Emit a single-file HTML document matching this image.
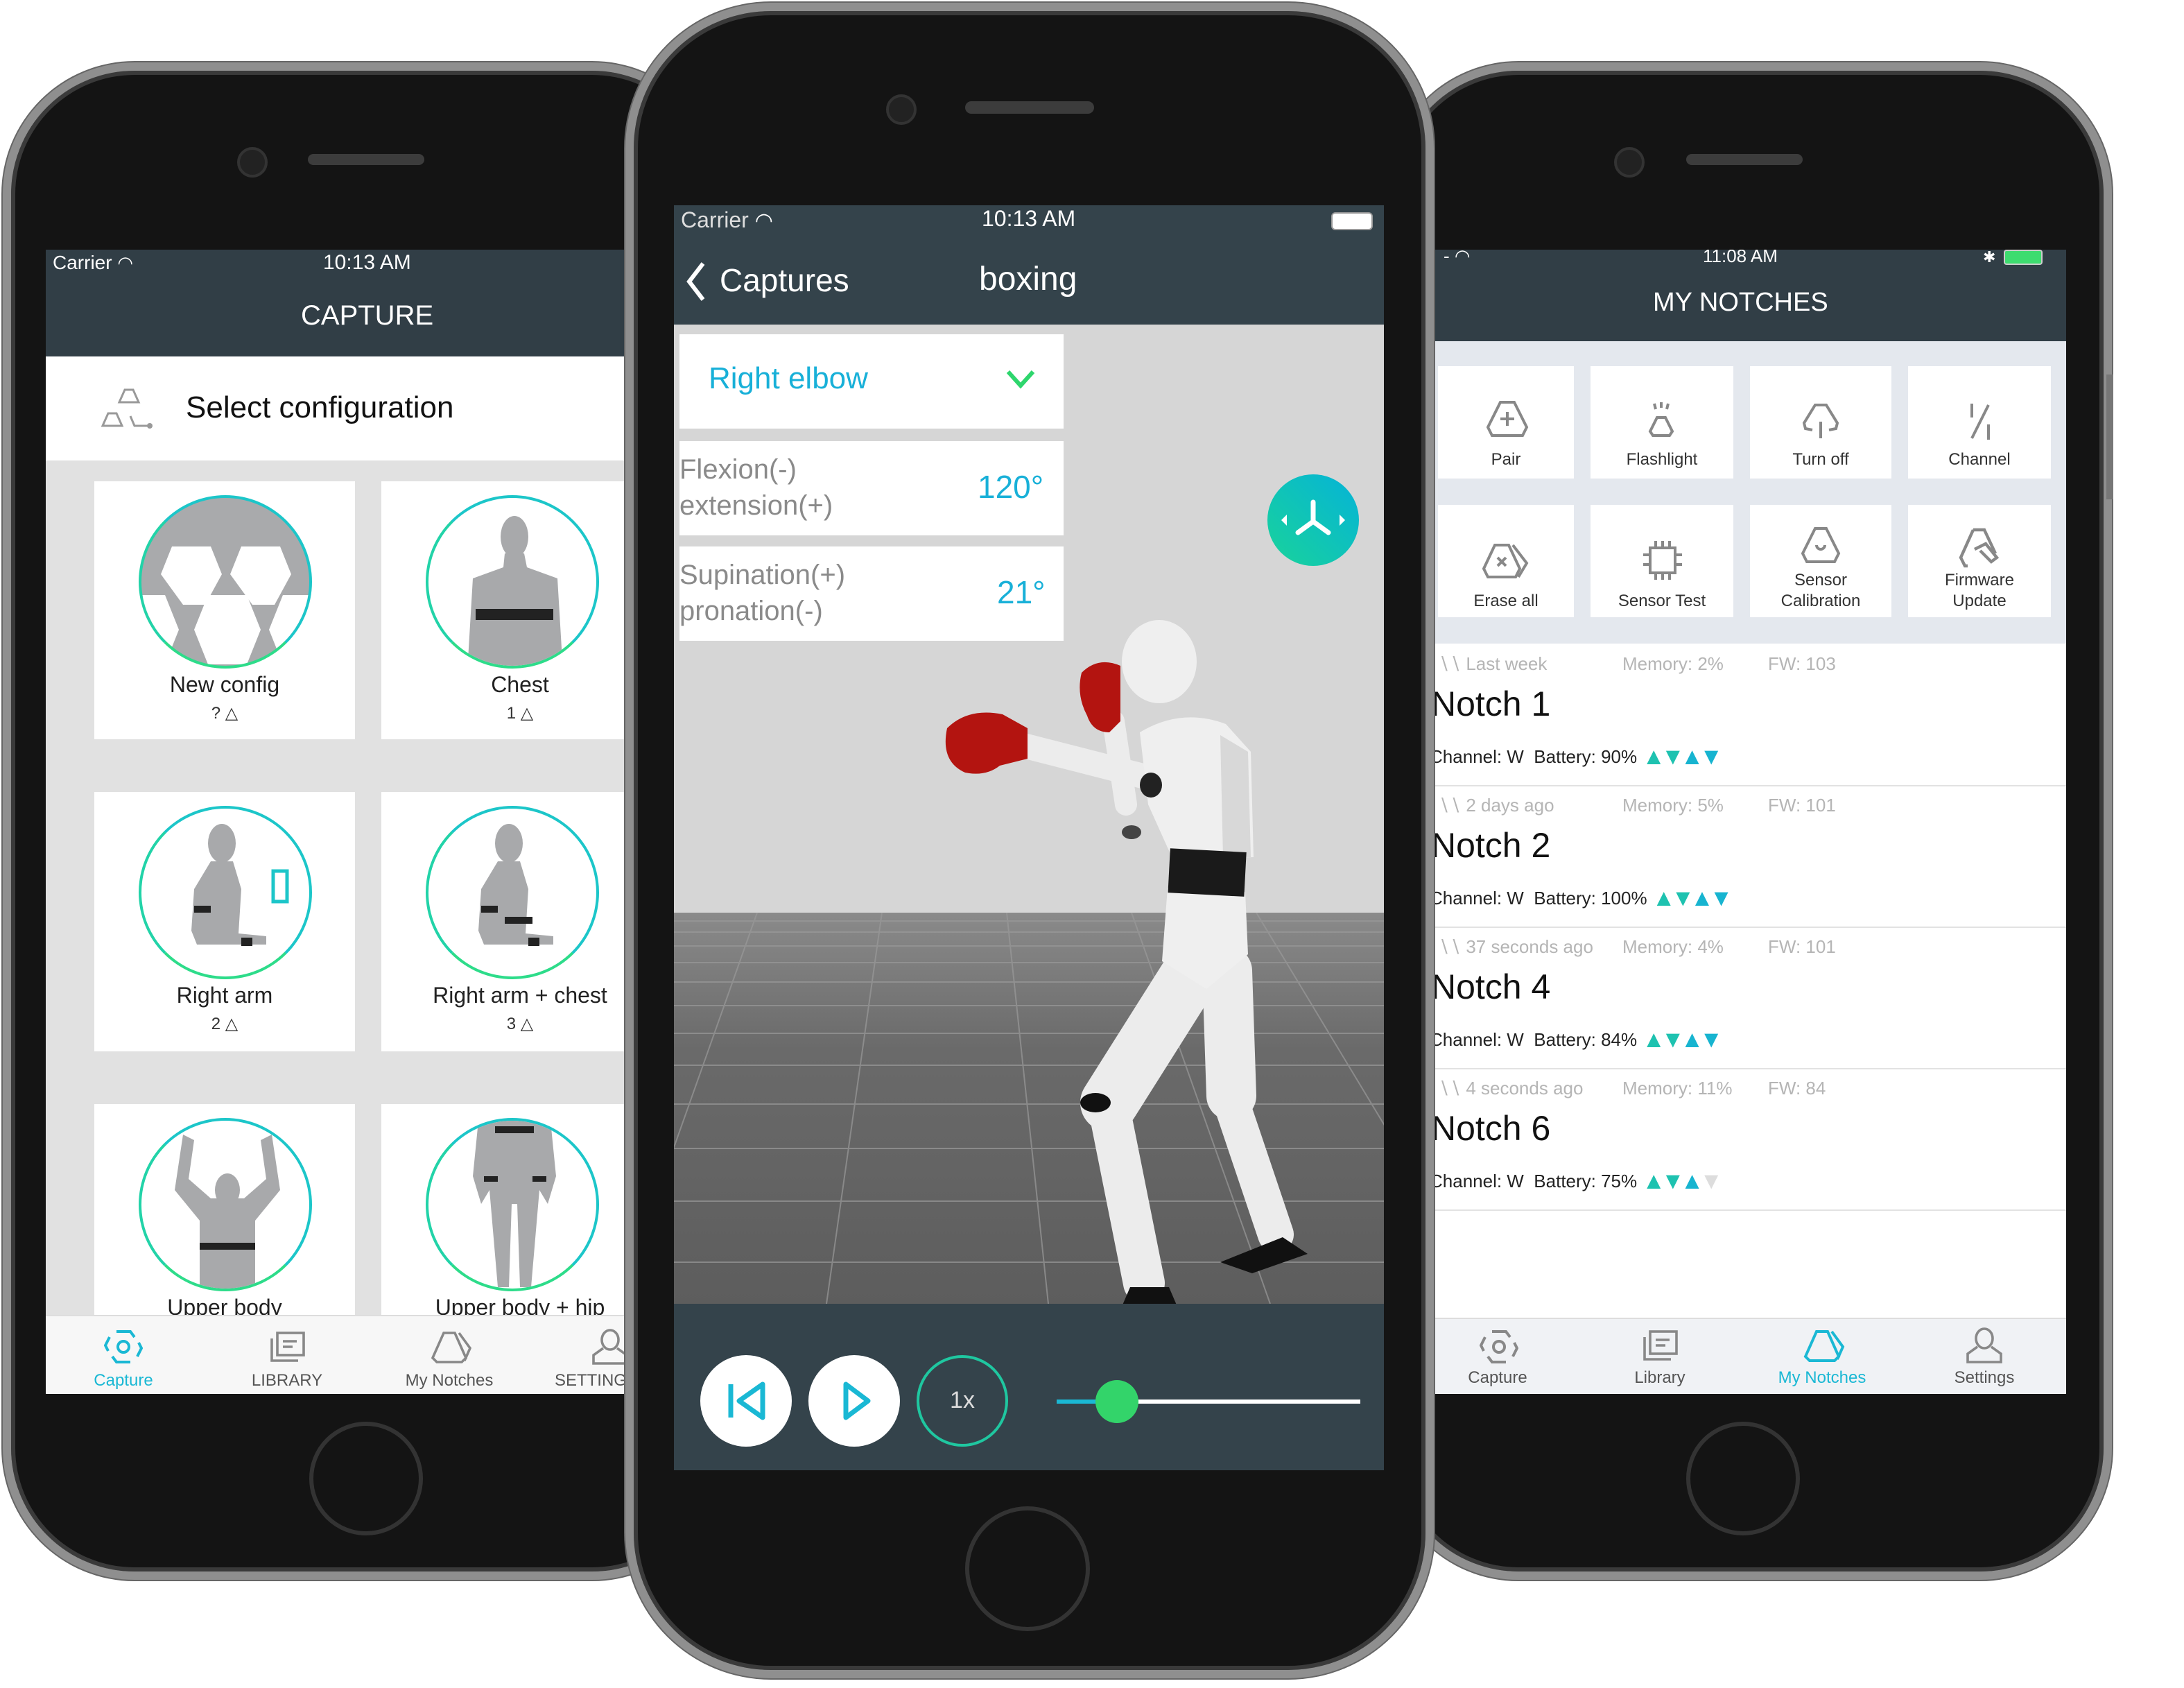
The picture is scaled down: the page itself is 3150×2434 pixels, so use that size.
<!DOCTYPE html>
<html><head><meta charset="utf-8">
<style>
html,body{margin:0;padding:0;background:#fff;}
body{width:3150px;height:2433px;overflow:hidden;position:relative;font-family:"Liberation Sans",sans-serif;}
#w{position:absolute;left:0;top:0;width:1575px;height:1217px;transform:scale(2);transform-origin:0 0;}
.ph{position:absolute;background:#141414;border:6px solid #8f8f8f;box-shadow:inset 0 0 0 3px #3a3a3a,0 0 0 1px #666;box-sizing:border-box;}
.scr{position:absolute;overflow:hidden;background:#fff;}
.a{position:absolute;}
.hdr{background:#313e46;color:#fff;}
.card{position:absolute;background:#fff;}
.ring{position:absolute;border-radius:50%;border:2px solid #1cc6c9;box-sizing:border-box;overflow:hidden;background:#fff;border-bottom-color:#2ddc8a;border-left-color:#22d3a8;}
.lbl{position:absolute;width:100%;text-align:center;font-size:16px;color:#222;}
.sub{position:absolute;width:100%;text-align:center;font-size:12px;color:#333;}
.tab{position:absolute;text-align:center;font-size:12px;color:#555;width:110px;}
.tile{position:absolute;background:#fff;text-align:center;font-size:12px;color:#333;}
.row{position:absolute;left:0;width:455px;height:102px;border-bottom:1px solid #e2e2e2;}
.meta{position:absolute;top:7px;font-size:13px;color:#b5b5b5;}
.nm{position:absolute;left:-3px;top:30px;font-size:25px;color:#111;}
.ch{position:absolute;left:-4px;top:72px;font-size:13px;color:#222;}
.bat{font-size:17px;letter-spacing:-3px;color:#1ec2b0;vertical-align:-1px;}
.home{position:absolute;border-radius:50%;border:3px solid #333;box-sizing:border-box;}
</style></head><body><div id="w">

<!-- LEFT PHONE -->
<div class="ph" style="left:2px;top:45px;width:520px;height:1094px;border-radius:95px;"></div>
<div class="a" style="left:171px;top:106px;width:18px;height:18px;border-radius:50%;background:#222;border:2px solid #333;"></div>
<div class="a" style="left:222px;top:111px;width:84px;height:8px;border-radius:4px;background:#3c3c3c;"></div>
<div class="home" style="left:223px;top:1025px;width:82px;height:82px;"></div>
<div class="scr" style="left:33px;top:180px;width:430px;height:825px;background:#e1e1e1;">
  <div class="a hdr" style="left:0;top:0;width:430px;height:77px;"></div>
  <div class="a" style="left:5px;top:1px;font-size:14px;color:#fff;">Carrier <span style="font-size:13px">&#x25E0;</span></div>
  <div class="a" style="left:200px;top:1px;font-size:15px;color:#fff;">10:13 AM</div>
  <div class="a" style="left:184px;top:37px;font-size:20px;color:#fff;">CAPTURE</div>
  <div class="a" style="left:0;top:77px;width:430px;height:75px;background:#fff;"></div>
  <svg class="a" style="left:40px;top:98px" width="40" height="34" viewBox="0 0 40 34"><g fill="none" stroke="#999" stroke-width="1.5"><path d="M17 3h6l4 9h-14z"/><path d="M5 20h6l4 9H1z"/><path d="M21 22l3 7h10"/></g><circle cx="35" cy="29" r="2" fill="#999"/></svg>
  <div class="a" style="left:101px;top:101px;font-size:22px;color:#111;">Select configuration</div>
  <div class="card" style="left:35px;top:167px;width:188px;height:186px;">
    <div class="ring" style="left:32px;top:10px;width:125px;height:125px;background:#a9aaac;">
      <svg width="125" height="125" viewBox="0 0 125 125"><g fill="#fff"><path d="M22 35h28l8 20-12 22H30L14 55z"/><path d="M72 35h28l8 20-12 22H80L64 55z"/><path d="M48 70h28l10 25-10 25H48l-10-25z"/><path d="M-5 70h22l10 25-10 25H-5z"/><path d="M102 70h25v50h-25l-10-25z"/></g></svg>
    </div>
    <div class="lbl" style="top:139px;">New config</div><div class="sub" style="top:160px;">? &#x25B3;</div>
  </div>
  <div class="card" style="left:242px;top:167px;width:200px;height:186px;">
    <div class="ring" style="left:32px;top:10px;width:125px;height:125px;">
      <svg width="125" height="125" viewBox="0 0 125 125"><g fill="#a8a9ab"><ellipse cx="62" cy="28" rx="10" ry="15"/><path d="M55 40h14l2 10 22 8 4 67H28l4-67 22-8z"/></g><rect x="34" y="80" width="56" height="8" fill="#222"/></svg>
    </div>
    <div class="lbl" style="top:139px;">Chest</div><div class="sub" style="top:160px;">1 &#x25B3;</div>
  </div>
  <div class="card" style="left:35px;top:391px;width:188px;height:187px;">
    <div class="ring" style="left:32px;top:10px;width:125px;height:125px;">
      <svg width="125" height="125" viewBox="0 0 125 125"><g fill="#a8a9ab"><ellipse cx="58" cy="25" rx="10" ry="14"/><path d="M50 38h16l6 20-2 32 20 2v6H40l-4-10 2-30z"/></g><rect x="38" y="70" width="12" height="5" fill="#222"/><rect x="72" y="93" width="8" height="6" fill="#222"/><path d="M95 45h10v22H95z" fill="none" stroke="#1cc6c9" stroke-width="2.5"/></svg>
    </div>
    <div class="lbl" style="top:139px;">Right arm</div><div class="sub" style="top:160px;">2 &#x25B3;</div>
  </div>
  <div class="card" style="left:242px;top:391px;width:200px;height:187px;">
    <div class="ring" style="left:32px;top:10px;width:125px;height:125px;">
      <svg width="125" height="125" viewBox="0 0 125 125"><g fill="#a8a9ab"><ellipse cx="58" cy="25" rx="10" ry="14"/><path d="M50 38h16l6 20-2 32 20 2v6H40l-4-10 2-30z"/></g><rect x="38" y="70" width="12" height="5" fill="#222"/><rect x="55" y="78" width="20" height="5" fill="#222"/><rect x="72" y="93" width="8" height="6" fill="#222"/></svg>
    </div>
    <div class="lbl" style="top:139px;">Right arm + chest</div><div class="sub" style="top:160px;">3 &#x25B3;</div>
  </div>
  <div class="card" style="left:35px;top:616px;width:188px;height:160px;">
    <div class="ring" style="left:32px;top:10px;width:125px;height:125px;">
      <svg width="125" height="125" viewBox="0 0 125 125"><g fill="#a8a9ab"><ellipse cx="62" cy="50" rx="9" ry="12"/><path d="M30 10l8 4-4 28 16 14h24l16-14-4-28 8-4 6 40-18 22v50H42V72L24 50z"/></g><rect x="42" y="88" width="40" height="5" fill="#222"/></svg>
    </div>
    <div class="lbl" style="top:139px;">Upper body</div>
  </div>
  <div class="card" style="left:242px;top:616px;width:200px;height:160px;">
    <div class="ring" style="left:32px;top:10px;width:125px;height:125px;">
      <svg width="125" height="125" viewBox="0 0 125 125"><g fill="#a8a9ab"><path d="M36 0h52l4 40-6 20-6-10-6 70h-8l-2-60h-4l-2 60h-8l-6-70-6 10-6-20z"/></g><rect x="48" y="4" width="28" height="5" fill="#222"/><rect x="40" y="40" width="10" height="4" fill="#222"/><rect x="75" y="40" width="10" height="4" fill="#222"/></svg>
    </div>
    <div class="lbl" style="top:139px;">Upper body + hip</div>
  </div>
  <div class="a" style="left:0;top:768px;width:430px;height:57px;background:#f7f7f7;border-top:1px solid #ddd;"></div>
  <svg class="a" style="left:42px;top:778px" width="28" height="26" viewBox="0 0 28 26"><g fill="none" stroke="#1ab8d4" stroke-width="2"><path d="M9 2h10l3 4M25 10l2 4-3 6M19 24H9l-3-4M3 16l-2-4 3-6"/><circle cx="14" cy="13" r="4"/></g></svg>
  <div class="tab" style="left:1px;top:808px;color:#1ab8d4;">Capture</div>
  <svg class="a" style="left:160px;top:779px" width="28" height="24" viewBox="0 0 28 24"><g fill="none" stroke="#888" stroke-width="1.8"><rect x="7" y="2" width="19" height="16"/><path d="M3 6v16h19M11 8h10M11 12h7"/></g></svg>
  <div class="tab" style="left:119px;top:808px;">LIBRARY</div>
  <svg class="a" style="left:276px;top:779px" width="32" height="24" viewBox="0 0 32 24"><g fill="none" stroke="#888" stroke-width="1.8"><path d="M11 2h8l8 18-3 3H6l-3-3z"/><path d="M22 2l8 11-4 9"/></g></svg>
  <div class="tab" style="left:236px;top:808px;">My Notches</div>
  <svg class="a" style="left:393px;top:777px" width="28" height="28" viewBox="0 0 28 28"><g fill="none" stroke="#888" stroke-width="1.8"><ellipse cx="14" cy="9" rx="6" ry="7"/><path d="M9 15l-7 5v6h24v-6l-7-5"/></g></svg>
  <div class="tab" style="left:342px;top:808px;">SETTINGS</div>
</div>

<!-- RIGHT PHONE -->
<div class="ph" style="left:1000px;top:45px;width:523px;height:1094px;border-radius:95px;"></div>
<div class="a" style="left:1164px;top:106px;width:18px;height:18px;border-radius:50%;background:#222;border:2px solid #333;"></div>
<div class="a" style="left:1216px;top:111px;width:84px;height:8px;border-radius:4px;background:#3c3c3c;"></div>
<div class="home" style="left:1216px;top:1025px;width:82px;height:82px;"></div>
<div class="a" style="left:1519px;top:270px;width:5px;height:90px;background:#777;"></div>
<div class="scr" style="left:1035px;top:180px;width:455px;height:825px;">
  <div class="a hdr" style="left:0;top:0;width:455px;height:66px;"></div>
  <div class="a" style="left:6px;top:-3px;font-size:13px;color:#fff;">- &#x25E0;</div>
  <div class="a" style="left:193px;top:-3px;font-size:13px;color:#fff;">11:08 AM</div>
  <div class="a" style="left:395px;top:-1px;font-size:11px;color:#fff;">&#x2731;</div>
  <div class="a" style="left:410px;top:0px;width:26px;height:9px;border:1px solid #ccc;border-radius:2px;background:#3ddc6f;"></div>
  <div class="a" style="left:157px;top:28px;font-size:19px;color:#fff;">MY NOTCHES</div>
  <div class="a" style="left:0;top:66px;width:455px;height:218px;background:#e4e8ee;"></div>
  <div class="tile" style="left:2px;top:84px;width:98px;height:81px;"><svg class="a" style="left:34px;top:24px" width="32" height="28" viewBox="0 0 32 28"><g fill="none" stroke="#888" stroke-width="2"><path d="M11 2h10l9 18-3 6H5l-3-6z"/><path d="M16 9v10M11 14h10"/></g></svg><div class="a" style="left:0;width:98px;top:60px;">Pair</div></div>
  <div class="tile" style="left:112px;top:84px;width:103px;height:81px;"><svg class="a" style="left:38px;top:25px" width="26" height="28" viewBox="0 0 26 28"><g fill="none" stroke="#888" stroke-width="2"><path d="M10 12h6l5 10-2 3H7l-2-3z"/><path d="M8 2l1 4M13 1v4M18 2l-1 4"/></g></svg><div class="a" style="left:0;width:103px;top:60px;">Flashlight</div></div>
  <div class="tile" style="left:227px;top:84px;width:102px;height:81px;"><svg class="a" style="left:36px;top:26px" width="30" height="30" viewBox="0 0 30 30"><g fill="none" stroke="#888" stroke-width="2"><path d="M9 20l-5-1-1-4 8-13h8l8 13-1 4-5 1"/><path d="M15 14v12"/></g></svg><div class="a" style="left:0;width:102px;top:60px;">Turn off</div></div>
  <div class="tile" style="left:341px;top:84px;width:103px;height:81px;"><svg class="a" style="left:40px;top:24px" width="24" height="32" viewBox="0 0 24 32"><g fill="none" stroke="#888" stroke-width="2"><path d="M6 3v10M18 18v11M18 4L6 28"/></g></svg><div class="a" style="left:0;width:103px;top:60px;">Channel</div></div>
  <div class="tile" style="left:2px;top:184px;width:98px;height:81px;"><svg class="a" style="left:32px;top:27px" width="36" height="28" viewBox="0 0 36 28"><g fill="none" stroke="#888" stroke-width="2"><path d="M9 2h10l8 17-3 6H4l-3-6z"/><path d="M22 2l10 13-6 10M11 11l6 6M17 11l-6 6"/></g></svg><div class="a" style="left:0;width:98px;top:62px;">Erase all</div></div>
  <div class="tile" style="left:112px;top:184px;width:103px;height:81px;"><svg class="a" style="left:37px;top:24px" width="30" height="32" viewBox="0 0 30 32"><g fill="none" stroke="#888" stroke-width="2"><rect x="6" y="7" width="18" height="18"/><path d="M10 2v5M15 2v5M20 2v5M10 25v5M15 25v5M20 25v5M1 12h5M1 19h5M24 12h5M24 19h5"/></g></svg><div class="a" style="left:0;width:103px;top:62px;">Sensor Test</div></div>
  <div class="tile" style="left:227px;top:184px;width:102px;height:81px;"><svg class="a" style="left:36px;top:15px" width="30" height="30" viewBox="0 0 30 30"><g fill="none" stroke="#888" stroke-width="2"><path d="M11 2h8l9 18-3 6H5l-3-6z"/><path d="M12 14a3 3 0 1 0 6 0"/></g></svg><div class="a" style="left:0;width:102px;top:47px;line-height:15px;">Sensor<br>Calibration</div></div>
  <div class="tile" style="left:341px;top:184px;width:103px;height:81px;"><svg class="a" style="left:36px;top:16px" width="32" height="30" viewBox="0 0 32 30"><g fill="none" stroke="#888" stroke-width="2.2"><path d="M11 2h8l8 17M7 28H5l-3-6 9-20"/><path d="M12 16l8-4 8 10-4 3-8-8"/></g></svg><div class="a" style="left:0;width:103px;top:47px;line-height:15px;">Firmware<br>Update</div></div>
  <div class="row" style="top:284px;">
    <div class="meta" style="left:2px;">&#x2216;&#x2216; Last week</div><div class="meta" style="left:135px;">Memory: 2%</div><div class="meta" style="left:240px;">FW: 103</div>
    <div class="nm">Notch 1</div><div class="ch">Channel: W &nbsp;Battery: 90% <span class="bat">&#x25B2;&#x25BC;<span style="color:#17b4d0">&#x25B2;&#x25BC;</span></span></div>
  </div>
  <div class="row" style="top:386px;">
    <div class="meta" style="left:2px;">&#x2216;&#x2216; 2 days ago</div><div class="meta" style="left:135px;">Memory: 5%</div><div class="meta" style="left:240px;">FW: 101</div>
    <div class="nm">Notch 2</div><div class="ch">Channel: W &nbsp;Battery: 100% <span class="bat">&#x25B2;&#x25BC;<span style="color:#17b4d0">&#x25B2;&#x25BC;</span></span></div>
  </div>
  <div class="row" style="top:488px;">
    <div class="meta" style="left:2px;">&#x2216;&#x2216; 37 seconds ago</div><div class="meta" style="left:135px;">Memory: 4%</div><div class="meta" style="left:240px;">FW: 101</div>
    <div class="nm">Notch 4</div><div class="ch">Channel: W &nbsp;Battery: 84% <span class="bat">&#x25B2;&#x25BC;<span style="color:#17b4d0">&#x25B2;&#x25BC;</span></span></div>
  </div>
  <div class="row" style="top:590px;">
    <div class="meta" style="left:2px;">&#x2216;&#x2216; 4 seconds ago</div><div class="meta" style="left:135px;">Memory: 11%</div><div class="meta" style="left:240px;">FW: 84</div>
    <div class="nm">Notch 6</div><div class="ch">Channel: W &nbsp;Battery: 75% <span class="bat">&#x25B2;&#x25BC;<span style="color:#17b4d0">&#x25B2;</span><span style="color:#ddd">&#x25BC;</span></span></div>
  </div>
  <div class="a" style="left:0;top:770px;width:455px;height:55px;background:#f0f2f5;border-top:1px solid #ddd;"></div>
  <svg class="a" style="left:32px;top:778px" width="28" height="26" viewBox="0 0 28 26"><g fill="none" stroke="#888" stroke-width="2"><path d="M9 2h10l3 4M25 10l2 4-3 6M19 24H9l-3-4M3 16l-2-4 3-6"/><circle cx="14" cy="13" r="4"/></g></svg>
  <div class="tab" style="left:-10px;top:806px;">Capture</div>
  <svg class="a" style="left:148px;top:778px" width="28" height="24" viewBox="0 0 28 24"><g fill="none" stroke="#888" stroke-width="1.8"><rect x="7" y="2" width="19" height="16"/><path d="M3 6v16h19M11 8h10M11 12h7"/></g></svg>
  <div class="tab" style="left:107px;top:806px;">Library</div>
  <svg class="a" style="left:264px;top:778px" width="32" height="24" viewBox="0 0 32 24"><g fill="none" stroke="#1ab8d4" stroke-width="2"><path d="M11 2h8l8 18-3 3H6l-3-3z"/><path d="M22 2l8 11-4 9"/></g></svg>
  <div class="tab" style="left:224px;top:806px;color:#1ab8d4;">My Notches</div>
  <svg class="a" style="left:382px;top:776px" width="28" height="28" viewBox="0 0 28 28"><g fill="none" stroke="#888" stroke-width="1.8"><ellipse cx="14" cy="9" rx="6" ry="7"/><path d="M9 15l-7 5v6h24v-6l-7-5"/></g></svg>
  <div class="tab" style="left:341px;top:806px;">Settings</div>
</div>

<!-- CENTER PHONE -->
<div class="ph" style="left:451px;top:2px;width:583px;height:1208px;border-radius:105px;"></div>
<div class="a" style="left:639px;top:68px;width:18px;height:18px;border-radius:50%;background:#222;border:2px solid #333;"></div>
<div class="a" style="left:696px;top:73px;width:93px;height:9px;border-radius:5px;background:#3c3c3c;"></div>
<div class="home" style="left:696px;top:1086px;width:90px;height:90px;"></div>
<div class="scr" style="left:486px;top:148px;width:512px;height:912px;background:#d6d6d6;">
  <div class="a hdr" style="left:0;top:0;width:512px;height:86px;background:#34434b;"></div>
  <div class="a" style="left:5px;top:2px;font-size:16px;color:#ddd;">Carrier <span style="font-size:15px;color:#fff">&#x25E0;</span></div>
  <div class="a" style="left:222px;top:2px;font-size:16px;color:#fff;">10:13 AM</div>
  <div class="a" style="left:474px;top:5px;width:28px;height:11px;border:1px solid #999;border-radius:3px;background:#fff;"></div>
  <svg class="a" style="left:8px;top:40px" width="16" height="30" viewBox="0 0 16 30"><path d="M13 2L3 15l10 13" fill="none" stroke="#fff" stroke-width="3"/></svg>
  <div class="a" style="left:33px;top:41px;font-size:23px;color:#fff;">Captures</div>
  <div class="a" style="left:220px;top:40px;font-size:24px;color:#fff;">boxing</div>
  <div class="a" style="left:0;top:510px;width:512px;height:282px;background:linear-gradient(#8a8a8a,#6a6a6a 35%,#5d5d5d);"></div>
  <svg class="a" style="left:0;top:510px" width="512" height="282" viewBox="0 0 512 282"><g stroke="#9a9a9a" stroke-width="1" opacity=".7"><path d="M0 6h512M0 14h512M0 24h512M0 36h512M0 50h512M0 67h512M0 87h512M0 110h512M0 138h512M0 170h512M0 208h512M0 252h512"/><path d="M60 0L-40 282M150 0L110 282M240 0L270 282M330 0L430 282M420 0L590 282"/></g></svg>
  <svg class="a" style="left:0;top:290px" width="512" height="520" viewBox="486 438 512 520">
    <g stroke-linecap="round" fill="none" stroke="#ececec">
      <path d="M740 538L826 560" stroke-width="18"/>
      <path d="M803 520L812 580" stroke-width="16"/>
      <path d="M860 700L800 795" stroke-width="42"/>
      <path d="M800 800L825 925" stroke-width="30"/>
      <path d="M885 700L888 790" stroke-width="36"/>
      <path d="M888 795L920 890" stroke-width="26"/>
    </g>
    <g fill="#efefef">
      <ellipse cx="836" cy="477" rx="27" ry="30"/>
      <path d="M822 528q30-18 62-6l18 20 2 76-58 2-18-40z"/>
      <path d="M842 640l56 3 2 45-30 25-32-20z"/>
    </g>
    <path d="M880 530l20 12 2 76-20 0z" fill="#d8d8d8"/>
    <rect x="843" y="613" width="55" height="32" fill="#1a1a1a" transform="rotate(3 870 630)"/>
    <ellipse cx="830" cy="566" rx="8" ry="9" fill="#222"/>
    <ellipse cx="816" cy="600" rx="7" ry="5" fill="#444"/>
    <ellipse cx="790" cy="795" rx="11" ry="7" fill="#111"/>
    <path d="M880 910l45-18 18 12-40 14z" fill="#111"/>
    <path d="M815 928l28 0 6 14h-40z" fill="#111"/>
    <path d="M683 525q15-15 40-10l18 10v22l-20 5q-10 8-25 5q-18-8-13-32z" fill="#b31410"/>
    <path d="M780 485q12-12 28-5v40l-8 8q-12 0-16-12q-8-15-4-31z" fill="#b31410"/>
  </svg>
  <div class="a" style="left:4px;top:93px;width:277px;height:68px;background:#fff;"></div>
  <div class="a" style="left:25px;top:112px;font-size:22px;color:#18b0d8;">Right elbow</div>
  <svg class="a" style="left:238px;top:116px" width="24" height="18" viewBox="0 0 24 18"><path d="M3 4l9 10 9-10" fill="none" stroke="#2ed66d" stroke-width="3"/></svg>
  <div class="a" style="left:4px;top:170px;width:277px;height:68px;background:#fff;"></div>
  <div class="a" style="left:4px;top:178px;font-size:20px;color:#8a8a8a;line-height:26px;">Flexion(-)<br>extension(+)</div>
  <div class="a" style="left:219px;top:190px;font-size:23px;color:#18b0d8;">120°</div>
  <div class="a" style="left:4px;top:246px;width:277px;height:68px;background:#fff;"></div>
  <div class="a" style="left:4px;top:254px;font-size:20px;color:#8a8a8a;line-height:26px;">Supination(+)<br>pronation(-)</div>
  <div class="a" style="left:233px;top:266px;font-size:23px;color:#18b0d8;">21°</div>
  <div class="a" style="left:428px;top:194px;width:66px;height:66px;border-radius:50%;background:linear-gradient(225deg,#05b3d8,#19d39a);"></div>
  <svg class="a" style="left:428px;top:194px" width="66" height="66" viewBox="0 0 66 66"><g fill="none" stroke="#fff" stroke-width="3.5" stroke-linecap="round"><path d="M33 20v14M33 34l-11 8M33 34l11 8"/></g><path d="M10 33l4-4v8zM56 33l-4-4v8z" fill="#fff"/></svg>
  <div class="a" style="left:0;top:792px;width:512px;height:120px;background:#34434b;"></div>
  <div class="a" style="left:19px;top:829px;width:66px;height:66px;border-radius:50%;background:#fff;"></div>
  <svg class="a" style="left:19px;top:829px" width="66" height="66" viewBox="0 0 66 66"><path d="M22 21v24" stroke="#1ab8d4" stroke-width="3.5"/><path d="M45 21L28 33l17 12z" fill="none" stroke="#1ab8d4" stroke-width="3.5" stroke-linejoin="round"/></svg>
  <div class="a" style="left:97px;top:829px;width:66px;height:66px;border-radius:50%;background:#fff;"></div>
  <svg class="a" style="left:97px;top:829px" width="66" height="66" viewBox="0 0 66 66"><path d="M27 21l16 12-16 12z" fill="none" stroke="#1ab8d4" stroke-width="3.5" stroke-linejoin="round"/></svg>
  <div class="a" style="left:175px;top:829px;width:66px;height:66px;border-radius:50%;border:2px solid #1fc7a0;box-sizing:border-box;color:#ddd;font-size:17px;text-align:center;line-height:62px;">1x</div>
  <div class="a" style="left:276px;top:861px;width:219px;height:3px;background:#fff;"></div>
  <div class="a" style="left:276px;top:861px;width:43px;height:3px;background:#1ab8d4;"></div>
  <div class="a" style="left:304px;top:847px;width:31px;height:31px;border-radius:50%;background:#33d46a;"></div>
</div>

</div></body></html>
